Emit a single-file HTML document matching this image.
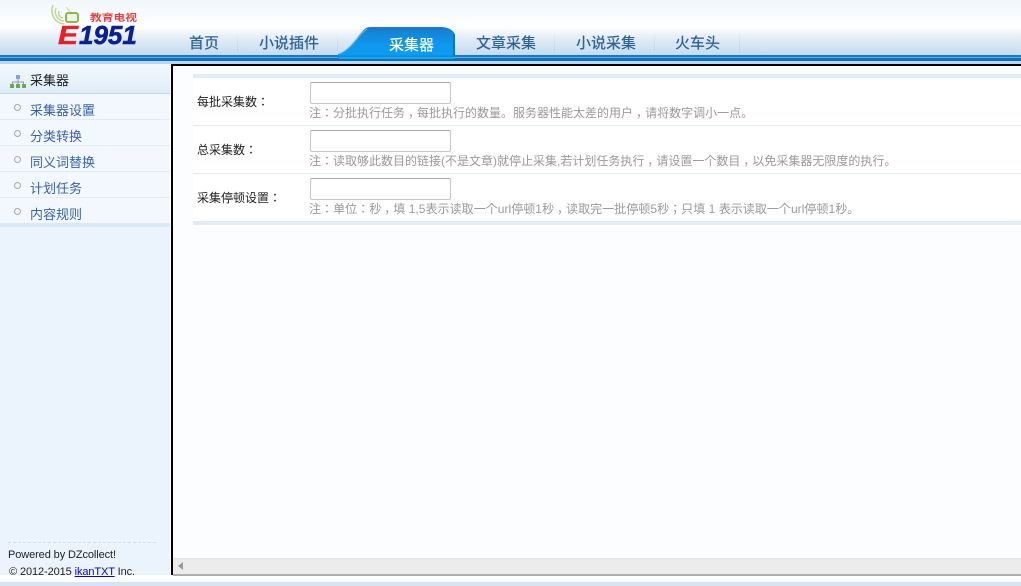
<!DOCTYPE html>
<html lang="ja"><head><meta charset="utf-8"><title>采集器</title>
<style>
*{box-sizing:border-box}
html,body{margin:0;padding:0;width:1021px;height:586px;overflow:hidden;background:#fff;font-family:"Liberation Sans","Noto Sans CJK JP",sans-serif;font-size:12px}
.abs,.abs *{position:absolute;white-space:nowrap}
.abs{left:0;top:0;width:1021px;height:586px}
.nav{font-size:15px;color:#2f6396;top:34px;line-height:20px;font-weight:500}
.sep{top:33px;width:1px;height:18px;background:linear-gradient(#e8f1f8,#b9d2e6)}
.item{left:30px;color:#3a62a8;font-size:13px;line-height:18px}
.dot{left:14px;width:7px;height:7px;border:1px solid #aaa;border-radius:50%;background:#f4f4f4}
.ln{left:0;width:170px;height:1px;background:#dfecf9}
.lab{left:197px;font-size:12px;line-height:16px;color:#222}
.inp{left:310px;width:141px;height:22px;background:#fff;border:1px solid #c8c8c8;border-top-color:#a9a9a9;border-radius:2px}
.note{left:309px;font-size:12px;line-height:16px;color:#9a9a9a}
.rl{left:193px;width:828px;height:1px;background:#e3ebf3}
.abs .c{position:relative;left:3px}
</style></head><body>
<div class="abs">
<div style="left:0;top:0;width:1021px;height:55px;background:linear-gradient(#f0f6fb 0,#fdfeff 22px,#fbfdfe 28px,#e2edf6 38px,#c6dcee 55px)"></div>
<div style="left:0;top:55px;width:1021px;height:2px;background:#1379c9"></div>
<div style="left:0;top:57px;width:1021px;height:1px;background:#5cb0ea"></div>
<div style="left:0;top:58px;width:1021px;height:3px;background:#0f6dbd"></div>
<div style="left:0;top:61px;width:1021px;height:3px;background:#b9d8ef"></div>

<svg style="left:48px;top:2px" width="34" height="24" viewBox="0 0 34 24">
<g fill="none" stroke="#b9dc92" stroke-width="1.500"><path d="M15 16C11 15 10 12 11 9"/><path d="M16 19C9 18 6 12 8 6"/><path d="M16 22C6 21 2 12 5 3"/></g>
<path d="M23 11L18 5" stroke="#c8dfa8" fill="none"/>
<rect x="18" y="11" width="12" height="9" rx="2" fill="#eef6df" stroke="#7fb23f" stroke-width="1.800"/>
</svg>
<div style="left:90px;top:11px;font-size:12px;line-height:14px;font-weight:700;color:#e84040;transform:scale(.98,.8);transform-origin:left center">教育电视</div>
<div style="left:58px;top:22px;font:italic 700 26px/26px 'Liberation Sans',sans-serif;color:#ee1c25;transform:scaleX(1.15);transform-origin:left;-webkit-text-stroke:.5px #ee1c25">E</div>
<div style="left:79px;top:22px;font:italic 700 26px/26px 'Liberation Sans',sans-serif;color:#0b1f96;-webkit-text-stroke:.6px #0b1f96">1951</div>

<div class="nav" style="left:189px">首页</div><div class="sep" style="left:237px"></div>
<div class="nav" style="left:259px">小说插件</div><div class="sep" style="left:337px"></div>
<svg style="left:338px;top:26px" width="120" height="36" viewBox="0 0 120 36">
<defs><linearGradient id="t" x1="0" y1="0" x2="0" y2="1"><stop offset="0" stop-color="#1b78c8"/><stop offset=".15" stop-color="#1484d6"/><stop offset=".55" stop-color="#0d97ee"/><stop offset=".85" stop-color="#0c9cf2"/><stop offset="1" stop-color="#0a7ccc"/></linearGradient></defs>
<path d="M0 28C14 23 20 8 28 2Q30 1 33 1H104Q115 2 117 9V33H0Z" fill="url(#t)"/>
<path d="M1 32H117" stroke="#28cbf6" stroke-width="1"/>
<path d="M116 8V30" stroke="#1268b0" stroke-width="1.500"/>
<path d="M1 28C14 23 20 9 29 3" stroke="#6cbcec" fill="none" stroke-width=".8"/>
</svg>
<div class="nav" style="left:389px;top:36px;color:#fff">采集器</div>
<div class="nav" style="left:476px">文章采集</div><div class="sep" style="left:554px"></div>
<div class="nav" style="left:576px">小说采集</div><div class="sep" style="left:654px"></div>
<div class="nav" style="left:675px">火车头</div><div class="sep" style="left:739px"></div>

<div style="left:0;top:64px;width:170px;height:511px;background:#ebf3fd"></div>
<div style="left:0;top:64px;width:170px;height:30px;background:linear-gradient(#f4f9fe,#dfecf8);border-bottom:1px solid #bcd7ee"></div>
<svg style="left:10px;top:75px" width="16" height="14" viewBox="0 0 16 14">
<rect x="6" y="0" width="4" height="4" fill="#7fa6de"/><path d="M8 4V7M2.500 9V7H13.500V9M8 7V9" stroke="#999" fill="none"/>
<rect x="0" y="9" width="4" height="4" fill="#6aaa4a"/><rect x="6" y="9" width="4" height="4" fill="#6aaa4a"/><rect x="12" y="9" width="4" height="4" fill="#6aaa4a"/>
</svg>
<div style="left:30px;top:72px;font-size:13px;line-height:18px;color:#222">采集器</div>
<div style="left:0;top:94px;width:170px;height:129px;background:#f3f8ff"></div>
<div class="dot" style="top:104px"></div><div class="item" style="top:102px">采集器设置</div><div class="ln" style="top:119px"></div>
<div class="dot" style="top:130px"></div><div class="item" style="top:128px">分类转换</div><div class="ln" style="top:145px"></div>
<div class="dot" style="top:156px"></div><div class="item" style="top:154px">同义词替换</div><div class="ln" style="top:171px"></div>
<div class="dot" style="top:182px"></div><div class="item" style="top:180px">计划任务</div><div class="ln" style="top:197px"></div>
<div class="dot" style="top:208px"></div><div class="item" style="top:206px">内容规则</div>
<div style="left:0;top:223px;width:170px;height:4px;background:#d8e9f8"></div>
<div style="left:8px;top:542px;width:148px;border-top:1px dashed #d5dde6;height:1px"></div>
<div style="left:8px;top:547px;line-height:16px;color:#222;font-size:11px;letter-spacing:-.1px">Powered by DZcollect!</div>
<div style="left:9px;top:564px;line-height:16px;color:#222;font-size:11px;letter-spacing:-.1px">© 2012-2015 <span style="position:static;color:#00e;text-decoration:underline">ikanTXT</span> Inc.</div>

<div style="left:173px;top:66px;width:848px;height:492px;background:#fbfdff"></div>
<div style="left:171px;top:64px;width:850px;height:2px;background:#000"></div>
<div style="left:171px;top:64px;width:2px;height:511px;background:#000"></div>
<div style="left:193px;top:74px;width:828px;height:4px;background:#deedf8"></div>
<div style="left:193px;top:78px;width:828px;height:143px;background:#fff"></div>
<div class="rl" style="top:125px"></div><div class="rl" style="top:173px"></div>
<div style="left:193px;top:221px;width:828px;height:4px;background:#deedf8"></div>
<div class="lab" style="top:94px">每批采集数：</div>
<div class="inp" style="top:82px"></div>
<div class="note" style="top:105px">注：分批执行任务<span class="c">，</span>每批执行的数量。服务器性能太差的用户<span class="c">，</span>请将数字调小一点。</div>
<div class="lab" style="top:142px">总采集数：</div>
<div class="inp" style="top:130px"></div>
<div class="note" style="top:153px">注：读取够此数目的链接(不是文章)就停止采集,若计划任务执行<span class="c">，</span>请设置一个数目<span class="c">，</span>以免采集器无限度的执行。</div>
<div class="lab" style="top:190px">采集停顿设置：</div>
<div class="inp" style="top:178px"></div>
<div class="note" style="top:201px;letter-spacing:.04px">注：单位：秒<span class="c">，</span>填 1,5表示读取一个url停顿1秒<span class="c">，</span>读取完一批停顿5秒；只填 1 表示读取一个url停顿1秒。</div>

<div style="left:173px;top:558px;width:848px;height:16px;background:#ececec;border-top:1px solid #e3e3e3"></div>
<svg style="left:178px;top:562px" width="6" height="8"><path d="M5 0V8L0 4Z" fill="#999"/></svg>
<div style="left:173px;top:574px;width:848px;height:2px;background:#aeaeae"></div>
<div style="left:0;top:582px;width:1021px;height:4px;background:#d5e5f6"></div>
</div>
</body></html>
